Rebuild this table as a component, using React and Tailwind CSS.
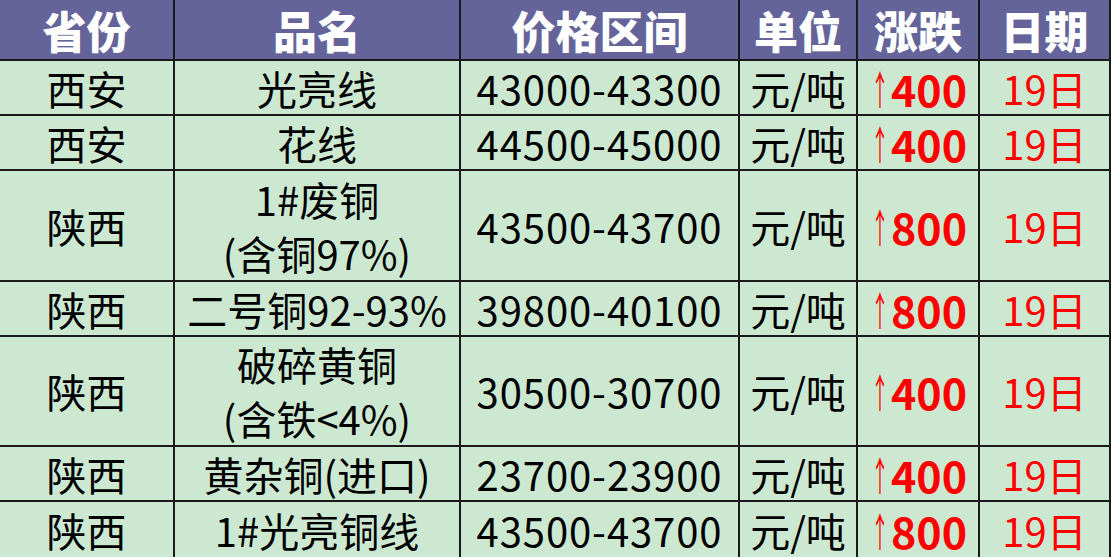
import React from "react";

const rows = [
  { prov: "西安", name: ["光亮线"], price: "43000-43300", chg: "400", h: "h-[55px]" },
  { prov: "西安", name: ["花线"], price: "44500-45000", chg: "400", h: "h-[55px]" },
  { prov: "陕西", name: ["1#废铜", "(含铜97%)"], price: "43500-43700", chg: "800", h: "h-[111px]" },
  { prov: "陕西", name: ["二号铜92-93%"], price: "39800-40100", chg: "800", h: "h-[55px]" },
  { prov: "陕西", name: ["破碎黄铜", "(含铁<4%)"], price: "30500-30700", chg: "400", h: "h-[110px]" },
  { prov: "陕西", name: ["黄杂铜(进口)"], price: "23700-23900", chg: "400", h: "h-[55px]" },
  { prov: "陕西", name: ["1#光亮铜线"], price: "43500-43700", chg: "800", h: "h-[55px]" },
];

const headers = ["省份", "品名", "价格区间", "单位", "涨跌", "日期"];
const cols = "grid grid-cols-[175px_286px_279px_118px_122px_131px]";
const cell = "flex flex-col items-center justify-center border-r-2 border-[#1a1a1a]";

export default function App() {
  return (
    <div
      className="w-[1111px] h-[557px] overflow-hidden bg-[#cce8d0] text-[40px] text-black"
      style={{ fontFamily: '"Noto Sans CJK SC", "Noto Sans", sans-serif' }}
    >
      {/* Header */}
      <div className={`${cols} h-[61px] bg-[#64649a] border-b-2 border-[#1a1a1a]`}>
        {headers.map((h, i) => (
          <div
            key={h}
            className={`${cell} ${i === 5 ? "border-r-0" : ""} text-[44px] leading-[48px] font-black text-white`}
          >
            {h}
          </div>
        ))}
      </div>

      {/* Rows */}
      {rows.map((r, i) => (
        <div
          key={i}
          className={`${cols} ${r.h} ${i < rows.length - 1 ? "border-b-2" : ""} border-[#1a1a1a]`}
        >
          <div className={`${cell} leading-[50px]`}>{r.prov}</div>
          <div className={`${cell} leading-[55px]`}>
            {r.name.map((n) => (
              <div key={n} className="whitespace-nowrap leading-[52px] my-[1px]">{n}</div>
            ))}
          </div>
          <div className={`${cell} leading-[50px] tracking-[0.9px]`}>{r.price}</div>
          <div className={`${cell} leading-[50px]`}>元/吨</div>
          <div className={`${cell} leading-[50px] text-[#ff0000]`}>
            <div className="flex items-center">
              <span className="inline-block scale-x-[0.45] -mx-[9px] font-normal">↑</span>
              <span className="text-[43px] font-bold">{r.chg}</span>
            </div>
          </div>
          <div className={`${cell} border-r-0 leading-[50px] text-[#ff0000]`}>19日</div>
        </div>
      ))}
    </div>
  );
}
